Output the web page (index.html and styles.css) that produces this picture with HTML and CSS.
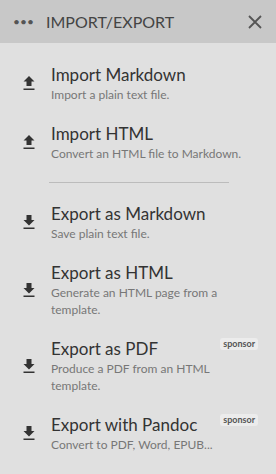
FILE: index.html
```html
<!DOCTYPE html>
<html lang="en">
<head>
  <meta charset="UTF-8">
  <title>Import/Export</title>
  <link rel="stylesheet" href="styles.css">
</head>
<body>
  <header class="panel-header">
    <span class="dots">&bull;&bull;&bull;</span>
    <h1>IMPORT/EXPORT</h1>
    <span class="close">
      <svg width="14" height="14" viewBox="0 0 14 14"><path d="M1 1L13 13M13 1L1 13" stroke="#555" stroke-width="1.8"/></svg>
    </span>
  </header>

  <ul class="actions">
    <li class="action">
      <span class="icon"><svg width="12" height="15" viewBox="0 0 12 15"><path d="M6 0L0.5 5.5h3v4.5h5V5.5h3z M0.5 12.5h11v1.6H0.5z" fill="#333"/></svg></span>
      <div class="text">
        <div class="title">Import Markdown</div>
        <div class="desc">Import a plain text file.</div>
      </div>
    </li>
    <li class="action">
      <span class="icon"><svg width="12" height="15" viewBox="0 0 12 15"><path d="M6 0L0.5 5.5h3v4.5h5V5.5h3z M0.5 12.5h11v1.6H0.5z" fill="#333"/></svg></span>
      <div class="text">
        <div class="title">Import HTML</div>
        <div class="desc">Convert an HTML file to Markdown.</div>
      </div>
    </li>
  </ul>

  <hr class="separator">

  <ul class="actions">
    <li class="action">
      <span class="icon"><svg width="12" height="15" viewBox="0 0 12 15"><path d="M3.5 0h5v5h3L6 10.5 0.5 5h3z M0.5 12.5h11v1.6H0.5z" fill="#333"/></svg></span>
      <div class="text">
        <div class="title">Export as Markdown</div>
        <div class="desc">Save plain text file.</div>
      </div>
    </li>
    <li class="action">
      <span class="icon"><svg width="12" height="15" viewBox="0 0 12 15"><path d="M3.5 0h5v5h3L6 10.5 0.5 5h3z M0.5 12.5h11v1.6H0.5z" fill="#333"/></svg></span>
      <div class="text">
        <div class="title">Export as HTML</div>
        <div class="desc">Generate an HTML page from a template.</div>
      </div>
    </li>
    <li class="action">
      <span class="icon"><svg width="12" height="15" viewBox="0 0 12 15"><path d="M3.5 0h5v5h3L6 10.5 0.5 5h3z M0.5 12.5h11v1.6H0.5z" fill="#333"/></svg></span>
      <div class="text">
        <div class="title">Export as PDF</div>
        <div class="desc">Produce a PDF from an HTML template.</div>
      </div>
      <span class="badge">sponsor</span>
    </li>
    <li class="action">
      <span class="icon"><svg width="12" height="15" viewBox="0 0 12 15"><path d="M3.5 0h5v5h3L6 10.5 0.5 5h3z M0.5 12.5h11v1.6H0.5z" fill="#333"/></svg></span>
      <div class="text">
        <div class="title">Export with Pandoc</div>
        <div class="desc">Convert to PDF, Word, EPUB...</div>
      </div>
      <span class="badge">sponsor</span>
    </li>
  </ul>
</body>
</html>
```

FILE: styles.css
```css
/* styles.css */

body {
  margin: 0;
  font-family: Lato, 'Noto Sans', sans-serif;
  background-color: #e0e0e0;
  color: #333;
}

.panel-header {
  display: flex;
  align-items: center;
  height: 43px;
  padding: 0 14px 0 13px;
  background-color: #c8c8c8;
}

.dots {
  font-size: 12px;
  color: #555;
  width: 33px;
}

.panel-header h1 {
  flex: 1;
  margin: 0;
  font-size: 16px;
  font-weight: 400;
  color: #444;
}

.close {
  display: flex;
}

.actions {
  list-style: none;
  margin: 0;
  padding: 0;
}

.actions:first-of-type {
  padding-top: 21px;
}

.action {
  display: flex;
  align-items: center;
  position: relative;
  padding: 0 25px 0 23px;
  margin-bottom: 20px;
}

.icon {
  display: flex;
  width: 28px;
  flex-shrink: 0;
}

.text {
  flex: 1;
}

.title {
  font-size: 17px;
  line-height: 22px;
  color: #333;
}

.desc {
  font-size: 12px;
  line-height: 17px;
  color: #777;
}

.separator {
  border: none;
  border-top: 1px solid #bcbcbc;
  margin: 4px 47px 20px 49px;
}

.badge {
  position: absolute;
  top: 0;
  right: 18px;
  font-size: 9px;
  line-height: 12px;
  font-weight: 700;
  color: #555;
  background-color: #ececec;
  border-radius: 3px;
  padding: 0 3px;
}
```
